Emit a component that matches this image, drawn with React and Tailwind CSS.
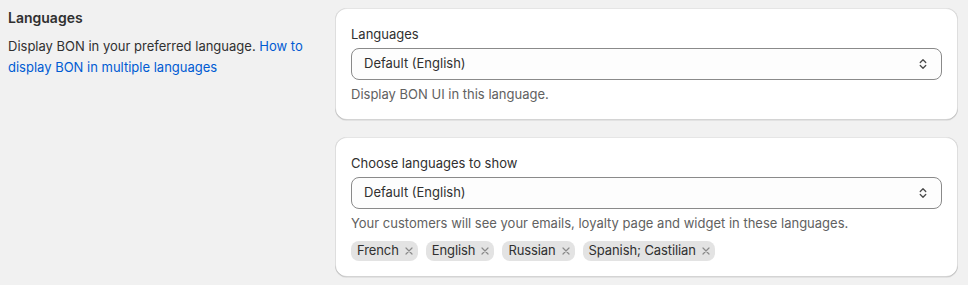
import { useState } from "react";

const font = { fontFamily: "Inter, 'Noto Sans', sans-serif" };

function SelectIcon() {
  return (
    <svg width="20" height="20" viewBox="0 0 20 20" fill="none" className="text-[#4a4a4a]">
      <path d="M7.25 8.5 10 5.75l2.75 2.75" stroke="currentColor" strokeWidth="1.3" strokeLinecap="round" strokeLinejoin="round" />
      <path d="M7.25 11.5 10 14.25l2.75-2.75" stroke="currentColor" strokeWidth="1.3" strokeLinecap="round" strokeLinejoin="round" />
    </svg>
  );
}

function SelectBox({ value }) {
  return (
    <div className="mt-1 h-8 flex items-center justify-between rounded-lg border border-[#8a8a8a] bg-[#fdfdfd] pl-3 pr-2">
      <span className="text-[13px] text-[#303030]">{value}</span>
      <SelectIcon />
    </div>
  );
}

function Tag({ label, onRemove }) {
  return (
    <div className="h-5 flex items-center rounded-lg bg-[#e3e3e3] pl-1.5 pr-[5px] text-[13px] tracking-[-0.1px] text-[#303030]">
      <span>{label}</span>
      <button onClick={onRemove} className="ml-[6px] w-2 h-2 flex items-center justify-center text-[#8a8a8a]">
        <svg width="8" height="8" viewBox="0 0 8 8" fill="none">
          <path d="M1 1l6 6M7 1 1 7" stroke="currentColor" strokeWidth="1.2" strokeLinecap="round" />
        </svg>
      </button>
    </div>
  );
}

export default function App() {
  const [tags, setTags] = useState(["French", "English", "Russian", "Spanish; Castilian"]);

  const card =
    "rounded-xl bg-white px-4 pt-4 pb-4 shadow-[0_1px_0_0_rgba(26,26,26,0.07),inset_0_1px_0_0_rgba(204,204,204,0.5),inset_0_-1px_0_0_rgba(0,0,0,0.17),inset_1px_0_0_0_rgba(0,0,0,0.13),inset_-1px_0_0_0_rgba(0,0,0,0.13)]";

  return (
    <div className="min-h-screen bg-[#f1f1f1] pt-2 pl-2 pr-[10px] flex gap-4" style={font}>
      {/* left description */}
      <div className="w-[311px] shrink-0">
        <h2 className="text-[14px] leading-5 font-semibold text-[#303030]">Languages</h2>
        <p className="mt-2 text-[13px] leading-[21px] text-[#303030]">
          Display BON in your preferred language.{" "}
          <a href="#" className="text-[#005bd3]">How to display BON in multiple languages</a>
        </p>
      </div>

      {/* cards */}
      <div className="flex-1 flex flex-col gap-[17px]">
        <div className={card}>
          <div className="text-[13px] leading-5 text-[#303030]">Languages</div>
          <SelectBox value="Default (English)" />
          <div className="mt-1 text-[13px] leading-5 text-[#616161]">Display BON UI in this language.</div>
        </div>

        <div className={card}>
          <div className="text-[13px] leading-5 text-[#303030]">Choose languages to show</div>
          <SelectBox value="Default (English)" />
          <div className="mt-1 text-[13px] leading-5 text-[#616161]">
            Your customers will see your emails, loyalty page and widget in these languages.
          </div>
          <div className="mt-2 flex gap-2">
            {tags.map((t) => (
              <Tag key={t} label={t} onRemove={() => setTags(tags.filter((x) => x !== t))} />
            ))}
          </div>
        </div>
      </div>
    </div>
  );
}
